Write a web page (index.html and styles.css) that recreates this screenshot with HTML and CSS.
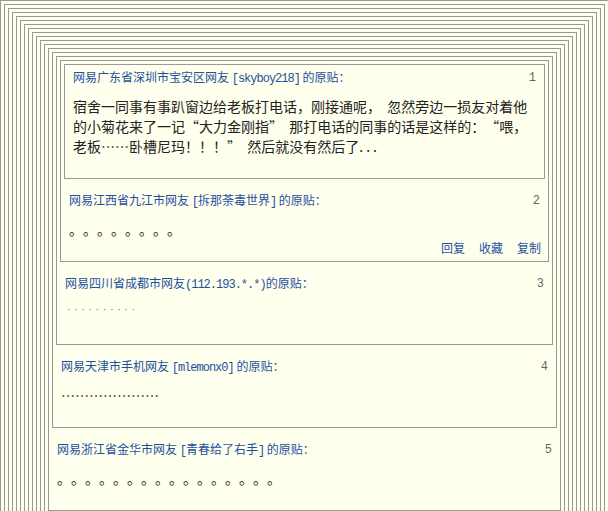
FILE: index.html
```html
<!DOCTYPE html>
<html lang="zh-CN">
<head>
<meta charset="utf-8">
<title>网易跟帖</title>
<link rel="stylesheet" href="styles.css">
</head>
<body>
<div class="floor outer">
<div class="floor">
<div class="floor">
<div class="floor">
<div class="floor">
<div class="floor">
<div class="floor">
<div class="floor">
<div class="floor">
<div class="floor">
<div class="floor">
<div class="floor">
<div class="floor">
<div class="floor">
<div class="floor">
<div class="floor">
<div class="floor">
  <div class="head"><span class="who">网易广东省深圳市宝安区网友 <span class="lat">[skyboy218]</span> 的原贴：</span><span class="num">1</span></div>
  <div class="body">宿舍一同事有事趴窗边给老板打电话，刚接通呢，&nbsp;&nbsp;忽然旁边一损友对着他的小菊花来了一记<span class="fw">“</span>大力金刚指<span class="fw">”</span>&nbsp; 那打电话的同事的话是这样的：<span class="fw">“</span>喂，老板<span class="fw">……</span>卧槽尼玛！！！<span class="fw">”</span>&nbsp; 然后就没有然后了<span class="dots">...</span></div>
  <div class="acts hidden"><a href="#">回复</a><a href="#">收藏</a><a href="#">复制</a></div>
</div>
  <div class="head"><span class="who">网易江西省九江市网友 <span class="lat">[</span>拆那荼毒世界<span class="lat">]</span> 的原贴：</span><span class="num">2</span></div>
  <div class="body">。。。。。。。。</div>
  <div class="acts"><a href="#">回复</a><a href="#">收藏</a><a href="#">复制</a></div>
</div>
  <div class="head"><span class="who">网易四川省成都市网友<span class="lat">(112.193.*.*)</span>的原贴：</span><span class="num">3</span></div>
  <div class="body"><span class="tiny">˙˙˙˙˙˙˙˙˙˙</span></div>
  <div class="acts hidden"><a href="#">回复</a><a href="#">收藏</a><a href="#">复制</a></div>
</div>
  <div class="head"><span class="who">网易天津市手机网友 <span class="lat">[mlemonx0]</span> 的原贴：</span><span class="num">4</span></div>
  <div class="body"><span class="fw">…………………</span></div>
  <div class="acts hidden"><a href="#">回复</a><a href="#">收藏</a><a href="#">复制</a></div>
</div>
  <div class="head"><span class="who">网易浙江省金华市网友 <span class="lat">[</span>青春给了右手<span class="lat">]</span> 的原贴：</span><span class="num">5</span></div>
  <div class="body">。。。。。。。。。。。。。。。。</div>
  <div class="acts hidden"><a href="#">回复</a><a href="#">收藏</a><a href="#">复制</a></div>
</div>
  <div class="head"><span class="who">网易网友的原贴：</span><span class="num">6</span></div>
  <div class="body">。。。</div>
  <div class="acts hidden"><a href="#">回复</a><a href="#">收藏</a><a href="#">复制</a></div>
</div>
  <div class="head"><span class="who">网易网友的原贴：</span><span class="num">7</span></div>
  <div class="body">。。。</div>
  <div class="acts hidden"><a href="#">回复</a><a href="#">收藏</a><a href="#">复制</a></div>
</div>
  <div class="head"><span class="who">网易网友的原贴：</span><span class="num">8</span></div>
  <div class="body">。。。</div>
  <div class="acts hidden"><a href="#">回复</a><a href="#">收藏</a><a href="#">复制</a></div>
</div>
  <div class="head"><span class="who">网易网友的原贴：</span><span class="num">9</span></div>
  <div class="body">。。。</div>
  <div class="acts hidden"><a href="#">回复</a><a href="#">收藏</a><a href="#">复制</a></div>
</div>
  <div class="head"><span class="who">网易网友的原贴：</span><span class="num">10</span></div>
  <div class="body">。。。</div>
  <div class="acts hidden"><a href="#">回复</a><a href="#">收藏</a><a href="#">复制</a></div>
</div>
  <div class="head"><span class="who">网易网友的原贴：</span><span class="num">11</span></div>
  <div class="body">。。。</div>
  <div class="acts hidden"><a href="#">回复</a><a href="#">收藏</a><a href="#">复制</a></div>
</div>
  <div class="head"><span class="who">网易网友的原贴：</span><span class="num">12</span></div>
  <div class="body">。。。</div>
  <div class="acts hidden"><a href="#">回复</a><a href="#">收藏</a><a href="#">复制</a></div>
</div>
  <div class="head"><span class="who">网易网友的原贴：</span><span class="num">13</span></div>
  <div class="body">。。。</div>
  <div class="acts hidden"><a href="#">回复</a><a href="#">收藏</a><a href="#">复制</a></div>
</div>
  <div class="head"><span class="who">网易网友的原贴：</span><span class="num">14</span></div>
  <div class="body">。。。</div>
  <div class="acts hidden"><a href="#">回复</a><a href="#">收藏</a><a href="#">复制</a></div>
</div>
  <div class="head"><span class="who">网易网友的原贴：</span><span class="num">15</span></div>
  <div class="body">。。。</div>
  <div class="acts hidden"><a href="#">回复</a><a href="#">收藏</a><a href="#">复制</a></div>
</div>
  <div class="head"><span class="who">网易网友的原贴：</span><span class="num">16</span></div>
  <div class="body">。。。</div>
  <div class="acts hidden"><a href="#">回复</a><a href="#">收藏</a><a href="#">复制</a></div>
</div>
  <div class="head"><span class="who">网易网友的原贴：</span><span class="num">17</span></div>
  <div class="body">。。。</div>
  <div class="acts hidden"><a href="#">回复</a><a href="#">收藏</a><a href="#">复制</a></div>
</div>
</body>
</html>
```
FILE: styles.css
```css
html, body {
  margin: 0;
  padding: 0;
  overflow: hidden;
  background: #ffffee;
}
body {
  font-family: "Noto Sans CJK SC", sans-serif;
  text-spacing-trim: space-all;
}
.floor {
  border: 1px solid #999999;
  padding: 3px;
  background: #ffffee;
}
.outer {
  width: 609px;
  box-sizing: border-box;
}
.head {
  display: flex;
  justify-content: space-between;
  align-items: center;
  height: 20px;
  margin-top: 12px;
  padding: 0 5px;
  font-size: 12px;
  line-height: 20px;
  color: #1e50a0;
  white-space: nowrap;
}
.head:first-child {
  margin-top: 0;
}
.lat {
  font-family: "Liberation Mono", monospace;
  letter-spacing: -1px;
}
.num {
  font-family: "Liberation Mono", monospace;
  color: #666666;
}
.body {
  margin-top: 8px;
  padding: 0 5px;
  font-size: 14px;
  line-height: 20px;
  color: #222222;
}
.fw {
  font-feature-settings: "fwid" 1;
}
.dots {
  letter-spacing: 3px;
}
.tiny {
  font-family: "Liberation Mono", monospace;
  font-size: 12px;
  line-height: 12px;
  color: #888888;
}
.acts {
  display: flex;
  justify-content: flex-end;
  gap: 14px;
  padding: 0 4px;
  margin-bottom: 2px;
  font-size: 12px;
  line-height: 17px;
}
.acts a {
  color: #1e50a0;
  text-decoration: none;
}
.acts.hidden {
  visibility: hidden;
}
```
